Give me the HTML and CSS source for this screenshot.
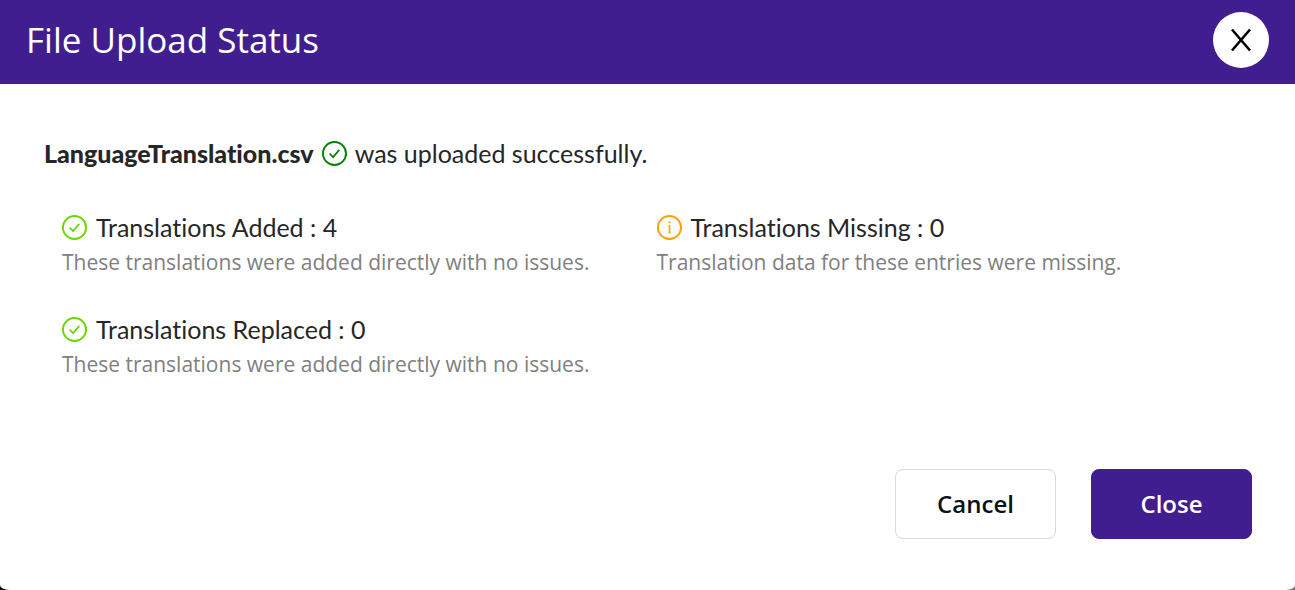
FILE: index.html
```html
<!DOCTYPE html>
<html lang="en">
<head>
	<meta charset="UTF-8">
	<title>File Upload Status</title>
	<link rel="stylesheet" href="styles.css">
</head>

<body>
	<div class="modal" role="dialog" aria-labelledby="modal-title">
		<header class="modal-header">
			<h1 class="modal-title" id="modal-title">File Upload Status</h1>
			<button type="button" class="btn-x" aria-label="Close dialog">
				<svg width="22" height="24" viewBox="0 0 22 24"><path d="M2 1.5L20 22.5M20 1.5L2 22.5" /></svg>
			</button>
		</header>

		<main class="modal-body">
			<p class="file">
				<strong>LanguageTranslation.csv</strong>
				<svg class="icon green" viewBox="0 0 26 26"><circle cx="13" cy="13" r="12" /><path d="M8 13l3.5 3.8 6.5-7.6" /></svg>
				<span>was uploaded successfully.</span>
			</p>

			<div class="results">
				<section class="result">
					<h2 class="result-title">
						<svg class="icon lime" viewBox="0 0 26 26"><circle cx="13" cy="13" r="12" /><path d="M8 13l3.5 3.8 6.5-7.6" /></svg>
						Translations Added : 4
					</h2>
					<p class="result-text">These translations were added directly with no issues.</p>
				</section>
				<section class="result">
					<h2 class="result-title">
						<svg class="icon orange" viewBox="0 0 26 26"><circle cx="13" cy="13" r="12" /><path d="M13 10.5V19.5M13 6.5v2.2" /></svg>
						Translations Missing : 0
					</h2>
					<p class="result-text">Translation data for these entries were missing.</p>
				</section>
				<section class="result">
					<h2 class="result-title">
						<svg class="icon lime" viewBox="0 0 26 26"><circle cx="13" cy="13" r="12" /><path d="M8 13l3.5 3.8 6.5-7.6" /></svg>
						Translations Replaced : 0
					</h2>
					<p class="result-text">These translations were added directly with no issues.</p>
				</section>
			</div>
		</main>

		<footer class="modal-footer">
			<button type="button" class="btn">Cancel</button>
			<button type="button" class="btn btn-primary">Close</button>
		</footer>
	</div>
</body>

</html>
```
FILE: styles.css
```css
* {
	box-sizing: border-box;
}
body {
	margin: 0;
	background: linear-gradient(to right, #000, #777);
	font-family: "Open Sans", sans-serif;
	color: #262626;
}
h1, h2, p {
	margin: 0;
	font-weight: 400;
}
.modal {
	display: flex;
	flex-direction: column;
	min-height: 100vh;
	background: #fff;
	border-radius: 0 0 9px 9px / 0 0 5px 5px;
}

/*header*/
.modal-header {
	display: flex;
	justify-content: space-between;
	align-items: center;
	padding: 12px 26px 16px;
	background: #411e8f;
	color: #fff;
}
.modal-title {
	font-size: 35px;
	line-height: 56px;
}
.btn-x {
	display: flex;
	justify-content: center;
	align-items: center;
	width: 56px;
	height: 56px;
	padding: 0;
	border: 0;
	border-radius: 50%;
	background: #fff;
	cursor: pointer;
}
.btn-x svg {
	fill: none;
	stroke: #000;
	stroke-width: 2.6;
}

/*body*/
.modal-body {
	flex: 1;
	padding: 53px 44px 0;
	font-family: Lato, sans-serif;
	font-variant-ligatures: none;
}
.file {
	display: flex;
	align-items: center;
	gap: 8px;
	font-size: 25px;
	line-height: 32px;
}
.file strong {
	font-weight: 900;
}
.icon {
	flex: none;
	width: 25px;
	height: 25px;
	fill: none;
	stroke: currentColor;
	stroke-width: 2;
}
.icon path {
	stroke-width: 1.7;
}
.green {
	color: #008000;
}
.lime {
	color: #68d800;
}
.orange {
	color: #ffa000;
}
.results {
	display: grid;
	grid-template-columns: 1fr 1fr;
	gap: 32px 0;
	padding: 40px 0 0 18px;
}
.result-title {
	display: flex;
	align-items: center;
	gap: 9px;
	font-size: 25px;
	line-height: 36px;
}
.result-text {
	font-family: "Open Sans", sans-serif;
	font-size: 21px;
	line-height: 34px;
	color: #808080;
}

/*footer*/
.modal-footer {
	display: flex;
	justify-content: flex-end;
	gap: 35px;
	padding: 0 43px 51px;
}
.btn {
	width: 161px;
	height: 70px;
	padding: 0 0 2px;
	border: 1px solid #d9d9d9;
	border-radius: 8px;
	background: #fff;
	color: #0b0f19;
	font: 600 24px "Open Sans", sans-serif;
	cursor: pointer;
}
.btn-primary {
	border-color: #411e8f;
	background: #411e8f;
	color: #fff;
}
```
